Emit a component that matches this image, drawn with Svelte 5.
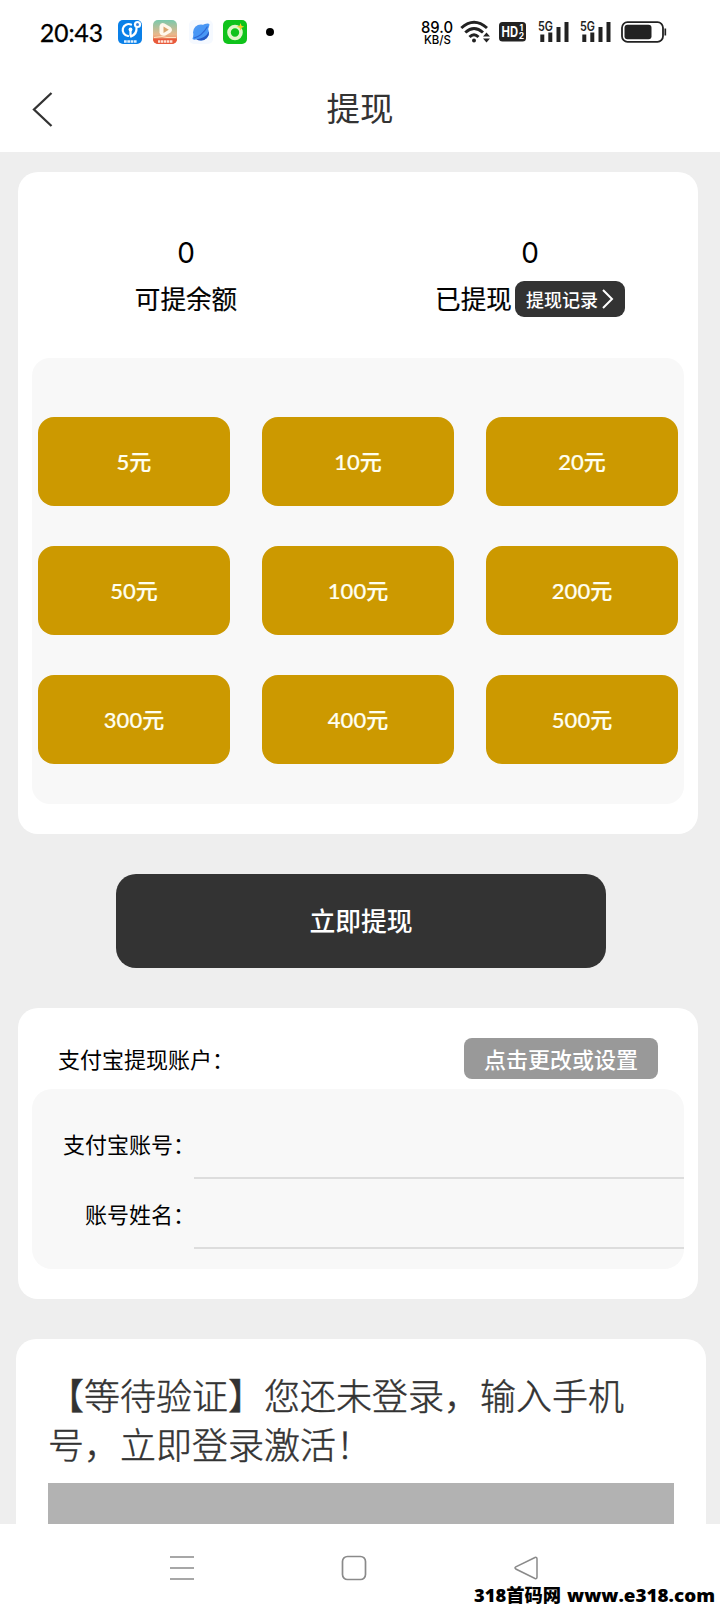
<script>
  const amounts = [5, 10, 20, 50, 100, 200, 300, 400, 500];
</script>

<div class="screen">
  <div class="status">
    <span class="time">20:43</span>
    <svg class="app1" width="24" height="24" viewBox="0 0 24 24">
      <rect width="24" height="24" rx="5" fill="#0a80e8" />
      <path d="M13 4.500a6 6 0 1 0-3 11.500M12.500 9.500v6M18.500 8q.5 6-5.500 8.500" fill="none" stroke="#fff" stroke-width="2.200" stroke-linecap="round" />
      <circle cx="12.500" cy="9.500" r="1.900" fill="#fff" />
      <circle cx="19.500" cy="4.500" r="3.600" fill="#fff" />
      <circle cx="19.500" cy="4.500" r="1.500" fill="#3b7fd8" />
      <path d="M6 21.500h13" stroke="#dff0ff" stroke-width="2.600" stroke-dasharray="2.700 .6" />
    </svg>
    <svg class="app2" width="24" height="24" viewBox="0 0 24 24">
      <defs>
        <linearGradient id="warm" x1="0" y1="0" x2="0" y2="1">
          <stop offset="0" stop-color="#79c9ac" />
          <stop offset=".6" stop-color="#e9b78b" />
          <stop offset="1" stop-color="#ee6a48" />
        </linearGradient>
      </defs>
      <rect width="24" height="24" rx="5" fill="url(#warm)" />
      <path d="M6.500 6q1-4 5-2.500l6 3.500q3 3 0 5.500l-5 3q-5 1-6-3z" fill="#fff8ec" />
      <path d="M10.500 6.500v6.500l5.300-3.200z" fill="#d9a56e" />
      <path d="M0 18.500h24v.5a5 5 0 0 1-5 5H5a5 5 0 0 1-5-5z" fill="#e85a3c" />
      <path d="M1 17.500l8-1 5 1h9" fill="none" stroke="#ffe2c0" stroke-width="1" />
      <path d="M5 21.500h15" stroke="#ffe5d8" stroke-width="2.400" stroke-dasharray="2.400 .6" />
    </svg>
    <svg class="app3" width="24" height="24" viewBox="0 0 24 24">
      <rect width="24" height="24" rx="5" fill="#f5f9ff" />
      <circle cx="12" cy="12.500" r="8" fill="#4c98f4" />
      <path d="M12 20.500a8 8 0 0 0 8-9Q16 19 7 19q2 1.500 5 1.500z" fill="#2559c4" />
      <path d="M3.500 19Q5 10 12 6t8.500-1.500Q19 13 12.500 17T3.500 19z" fill="#4796f5" />
      <path d="M5 18Q13 16 18.500 6.500" fill="none" stroke="#2d67d4" stroke-width="1.200" />
    </svg>
    <svg class="app4" width="24" height="24" viewBox="0 0 24 24">
      <rect width="24" height="24" rx="5" fill="#0fc31b" />
      <circle cx="12" cy="12.500" r="6" fill="none" stroke="#dff5c9" stroke-width="3.600" />
      <path d="M17.500 3l1 2.700 2.800 1-2.700 1.100-1.100 2.700-1-2.700-2.800-1.100 2.800-1z" fill="#f3cf24" />
    </svg>
    <i class="dot"></i>

    <svg class="speed" width="34" height="28" viewBox="0 0 34 28">
      <text x="1" y="15" font-size="16.500" font-weight="500" textLength="32" lengthAdjust="spacingAndGlyphs">89.0</text>
      <text x="4" y="26" font-size="12" font-weight="500" textLength="27" lengthAdjust="spacingAndGlyphs">KB/S</text>
    </svg>
    <svg class="wifi" width="30" height="24" viewBox="0 0 30 24">
      <g fill="none" stroke="#222" stroke-width="3">
        <path d="M1.300 8Q14 -3.500 27 8" />
        <path d="M5.300 12.500Q14 4.500 23 12.500" />
        <path d="M9.500 17Q14 12.500 18.500 17" />
      </g>
      <circle cx="14" cy="20.500" r="2" fill="#222" />
      <path d="M23 16.500l3.500-4 3.500 4zM23 18.500l3.500 4 3.500-4z" fill="#222" />
    </svg>
    <svg class="hd" width="27" height="20" viewBox="0 0 27 20">
      <rect width="27" height="19.500" rx="3.500" fill="#222" />
      <text x="2.500" y="15.300" font-size="15" font-weight="700" fill="#fff" textLength="16.500" lengthAdjust="spacingAndGlyphs">HD</text>
      <text x="20.500" y="9" font-size="8.500" font-weight="700" fill="#fff">1</text>
      <text x="19.700" y="17.300" font-size="8.500" font-weight="700" fill="#fff">2</text>
    </svg>
    {#each [0, 1] as sim (sim)}
      <svg class="signal" width="32" height="24" viewBox="0 0 32 24">
        <text x="0" y="11" font-size="13" font-weight="600" fill="#222" textLength="15" lengthAdjust="spacingAndGlyphs">5G</text>
        <path d="M2.300 14.500h4V22h-4zM10.300 12.500h4V22h-4zM18.500 7h4v15h-4zM26.500 2h4v20h-4z" fill="#222" />
      </svg>
    {/each}
    <svg class="battery" width="46" height="22" viewBox="0 0 46 22">
      <rect x="1" y="1.200" width="41" height="19.600" rx="5.500" fill="none" stroke="#222" stroke-width="1.800" />
      <rect x="3.500" y="3.800" width="27" height="14.400" rx="3" fill="#222" />
      <path d="M44.300 7.500v7" stroke="#222" stroke-width="1.700" />
    </svg>
  </div>

  <header>
    <svg class="back" width="22" height="36" viewBox="0 0 22 36">
      <path d="M19.500 2L2 18.500l17.500 16.500" fill="none" stroke="#333" stroke-width="2.300" />
    </svg>
    <h1>提现</h1>
  </header>

  <main>
    <section class="card balance">
      <div class="stats">
        <div class="stat">
          <b>0</b>
          <div class="line"><span class="name">可提余额</span></div>
        </div>
        <div class="stat taken">
          <b>0</b>
          <div class="line">
            <span class="name">已提现</span>
            <span class="records"><span>提现记录</span><svg width="13" height="20" viewBox="0 0 13 20"><path d="M2 1l9 9-9 9" fill="none" stroke="#fff" stroke-width="2" /></svg></span>
          </div>
        </div>
      </div>
      <div class="amounts">
        {#each amounts as amount (amount)}
          <button>{amount}元</button>
        {/each}
      </div>
    </section>

    <button class="submit">立即提现</button>

    <section class="card account">
      <div class="head">
        <span>支付宝提现账户：</span>
        <button class="edit">点击更改或设置</button>
      </div>
      <div class="fields">
        <div class="field"><span class="label">支付宝账号：</span><span class="value"></span></div>
        <div class="field"><span class="label">账号姓名：</span><span class="value"></span></div>
      </div>
    </section>

    <section class="notice">
      <p>【等待验证】您还未登录，输入手机<br />号，立即登录激活！</p>
      <div class="block"></div>
    </section>
  </main>

  <nav>
    <svg width="26" height="26" viewBox="0 0 26 26"><path d="M1 2h24M1 13h24M1 24h24" stroke="#8a8a8a" stroke-width="1.700" /></svg>
    <svg width="26" height="26" viewBox="0 0 26 26"><rect x="1.500" y="1.500" width="23" height="23" rx="5" fill="none" stroke="#8a8a8a" stroke-width="1.700" /></svg>
    <svg width="26" height="26" viewBox="0 0 26 26"><path d="M22 2.500L2.800 11.800q-1.600 1 0 2.200L22 23.500q2 .6 2-1.500V4q0-2.100-2-1.500z" fill="none" stroke="#8a8a8a" stroke-width="1.500" /></svg>
  </nav>

  <svg class="mark" width="244" height="24" viewBox="0 0 244 24">
    <text x="1" y="18" textLength="87" lengthAdjust="spacingAndGlyphs">318首码网</text>
    <text x="94" y="18" textLength="148" lengthAdjust="spacingAndGlyphs">www.e318.com</text>
  </svg>
</div>

<style>
  :global(body) {
    background: #fff;
  }
  .screen {
    position: relative;
    display: flex;
    flex-direction: column;
    width: 720px;
    height: 1612px;
    overflow: hidden;
    color: #000;
    font-family: Lato, "Noto Sans CJK SC", sans-serif;
  }
  svg {
    display: block;
    flex: none;
    overflow: visible;
  }
  button {
    border: 0;
    padding: 0;
    font: inherit;
    color: #fff;
  }
  .status {
    display: flex;
    align-items: center;
    height: 64px;
    flex: none;
    padding-left: 40px;
    box-sizing: border-box;
  }
  .status text {
    font-family: Inter, sans-serif;
  }
  .time {
    width: 78px;
    font-size: 24.5px;
    font-weight: 400;
    -webkit-text-stroke: 0.3px #000;
    white-space: nowrap;
  }
  .app2 { margin-left: 11px; }
  .app3 { margin-left: 12px; }
  .app4 { margin-left: 10px; }
  .dot {
    width: 8px;
    height: 8px;
    margin-left: 19px;
    border-radius: 50%;
    background: #000;
  }
  .speed { margin-left: 146px; }
  .wifi { margin-left: 6px; }
  .hd { margin-left: 9px; }
  .signal { margin-left: 12px; }
  .signal + .signal { margin-left: 10px; }
  .battery { margin-left: 9px; }

  header {
    display: grid;
    grid-template-columns: 100px 1fr 100px;
    align-items: center;
    height: 88px;
    flex: none;
  }
  .back {
    margin: 2px 0 0 32px;
  }
  h1 {
    margin: 0;
    text-align: center;
    font-size: 33.5px;
    font-weight: 400;
    line-height: 88px;
    color: #333;
  }

  main {
    display: flex;
    flex-direction: column;
    flex: 1;
    min-height: 0;
    overflow: hidden;
    background: #eee;
    padding-top: 20px;
  }
  .card {
    flex: none;
    margin: 0 22px 0 18px;
    padding: 0 14px;
    border-radius: 20px;
    background: #fff;
    box-sizing: border-box;
  }
  .balance {
    height: 662px;
  }
  .stats {
    display: grid;
    grid-template-columns: 322px 330px;
    height: 186px;
    box-sizing: border-box;
    padding-top: 60px;
  }
  .stat {
    display: flex;
    flex-direction: column;
    align-items: center;
    padding-right: 14px;
  }
  .taken {
    padding: 0;
    margin: 0 -11px 0 11px;
  }
  .stat b {
    font: 400 28px/42px Inter, sans-serif;
  }
  .line {
    display: flex;
    align-items: center;
    gap: 3px;
    height: 50px;
    font-size: 25.6px;
    white-space: nowrap;
  }
  .name {
    padding-bottom: 4px;
    -webkit-text-stroke: 0.2px #000;
  }
  .records {
    display: flex;
    align-items: center;
    justify-content: center;
    gap: 3px;
    width: 110px;
    height: 36px;
    border-radius: 9px;
    background: #333;
    color: #fff;
    font-size: 18px;
    font-weight: 500;
  }
  .records span {
    padding-bottom: 1px;
  }
  .amounts {
    display: grid;
    grid-template-columns: repeat(3, 192px);
    grid-auto-rows: 89px;
    gap: 40px 32px;
    height: 446px;
    padding: 59px 6px 0;
    box-sizing: border-box;
    border-radius: 18px;
    background: #f8f8f8;
  }
  .amounts button {
    padding-bottom: 3px;
    border-radius: 16px;
    background: #c90;
    font-size: 22px;
    font-weight: 500;
    color: #fffff0;
    -webkit-text-stroke: 0.2px #fffff0;
  }
  .submit {
    flex: none;
    width: 490px;
    height: 94px;
    margin: 40px 0 40px 116px;
    padding-bottom: 4px;
    border-radius: 20px;
    background: #333;
    font-size: 25.8px;
    font-weight: 500;
  }
  .account {
    height: 291px;
    font-size: 22px;
  }
  .head {
    display: flex;
    align-items: center;
    justify-content: space-between;
    height: 81px;
    padding: 21px 26px 0;
    box-sizing: border-box;
  }
  .head span,
  .edit {
    margin-bottom: 2px;
  }
  .edit {
    width: 194px;
    height: 41px;
    border-radius: 8px;
    background: #999;
    font-weight: 500;
  }
  .fields {
    height: 180px;
    padding-top: 20px;
    box-sizing: border-box;
    border-radius: 20px;
    background: #f8f8f8;
  }
  .field {
    display: grid;
    grid-template-columns: 162px 1fr;
    grid-template-rows: 70px;
  }
  .label {
    display: flex;
    justify-content: flex-end;
    margin-right: -1px;
    line-height: 72px;
    white-space: nowrap;
  }
  .value {
    border-bottom: 2px solid #ddd;
  }
  .notice {
    flex: none;
    height: 240px;
    margin: 40px 14px 0 16px;
    padding: 31px 32px 0;
    box-sizing: border-box;
    border-radius: 20px;
    background: #fff;
  }
  .notice p {
    margin: 0;
    font-size: 36px;
    font-weight: 300;
    line-height: 48.5px;
    color: #333;
    -webkit-text-stroke: 0.45px #333;
    white-space: nowrap;
    font-family: "Noto Sans CJK SC", sans-serif;
  }
  .block {
    height: 80px;
    margin-top: 16px;
    background: #b2b2b2;
  }
  nav {
    display: flex;
    align-items: center;
    gap: 146px;
    height: 88px;
    flex: none;
    padding-left: 169px;
    box-sizing: border-box;
    background: #fff;
  }
  .mark {
    position: absolute;
    left: 473px;
    top: 1584px;
    font: 900 18px "Open Sans", "Noto Sans CJK SC", sans-serif;
  }
</style>
